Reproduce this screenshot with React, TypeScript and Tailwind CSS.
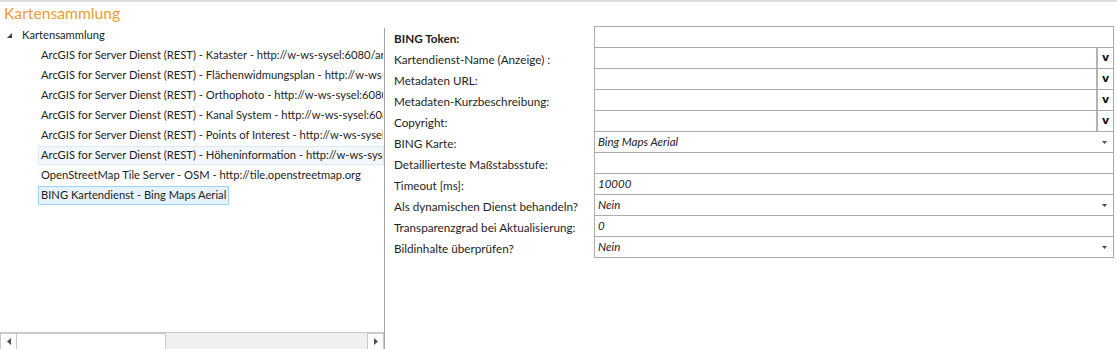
import React from "react";

const treeItems = [
  "ArcGIS for Server Dienst (REST) - Kataster - http://w-ws-sysel:6080/arcgis/rest/services/Kataster/MapServer",
  "ArcGIS for Server Dienst (REST) - Flächenwidmungsplan - http://w-ws-sysel:6080/arcgis/rest/services",
  "ArcGIS for Server Dienst (REST) - Orthophoto - http://w-ws-sysel:6080/arcgis/rest/services",
  "ArcGIS for Server Dienst (REST) - Kanal System - http://w-ws-sysel:6080/arcgis/rest/services",
  "ArcGIS for Server Dienst (REST) - Points of Interest - http://w-ws-sysel:6080/arcgis/rest/services",
  "ArcGIS for Server Dienst (REST) - Höheninformation - http://w-ws-sysel:6080/arcgis/rest/services",
  "OpenStreetMap Tile Server - OSM - http://tile.openstreetmap.org",
  "BING Kartendienst - Bing Maps Aerial",
];

type Field = {
  label: string;
  bold?: boolean;
  value?: string;
  kind: "text" | "more" | "select";
};

const fields: Field[] = [
  { label: "BING Token:", bold: true, kind: "text" },
  { label: "Kartendienst-Name (Anzeige) :", kind: "more" },
  { label: "Metadaten URL:", kind: "more" },
  { label: "Metadaten-Kurzbeschreibung:", kind: "more" },
  { label: "Copyright:", kind: "more" },
  { label: "BING Karte:", value: "Bing Maps Aerial", kind: "select" },
  { label: "Detaillierteste Maßstabsstufe:", kind: "text" },
  { label: "Timeout [ms]:", value: "10000", kind: "text" },
  { label: "Als dynamischen Dienst behandeln?", value: "Nein", kind: "select" },
  { label: "Transparenzgrad bei Aktualisierung:", value: "0", kind: "text" },
  { label: "Bildinhalte überprüfen?", value: "Nein", kind: "select" },
];

const DropArrow = () => (
  <svg width="5" height="3" viewBox="0 0 5 3" className="block">
    <polygon points="0,0 5,0 2.5,3" fill="#4a4a4a" />
  </svg>
);

const ScrollButton = ({ dir }: { dir: "left" | "right" }) => (
  <div className="w-[17px] h-[17px] border border-[#c8c8c8] bg-white flex items-center justify-center">
    <svg width="4" height="7" viewBox="0 0 4 7" className="block">
      {dir === "left" ? (
        <polygon points="4,0 4,7 0,3.5" fill="#505050" />
      ) : (
        <polygon points="0,0 0,7 4,3.5" fill="#505050" />
      )}
    </svg>
  </div>
);

export default function App() {
  return (
    <div
      className="w-[1117px] h-[349px] overflow-hidden bg-white border-t-2 border-[#dcdcdc] text-[#1e1e1e]"
      style={{ fontFamily: 'Lato, "Noto Sans", sans-serif' }}
    >
      {/* Header */}
      <div className="h-[23px] pl-[4px] text-[15.7px] leading-[22px] text-[#f29b32]">
        Kartensammlung
      </div>

      <div className="flex h-[324px]">
        {/* Tree */}
        <div className="w-[384px] flex flex-col">
          <div className="flex-1 overflow-hidden text-[11.2px]">
            <div className="h-[20px] flex items-center whitespace-nowrap">
              <div className="w-[22px] flex justify-end pr-[10px]">
                <svg width="5" height="5" viewBox="0 0 5 5" className="block">
                  <polygon points="5,0 5,5 0,5" fill="#3c3c3c" />
                </svg>
              </div>
              <span>Kartensammlung</span>
            </div>
            {treeItems.map((item, idx) => {
              const hover = idx === 5;
              const selected = idx === 7;
              return (
                <div key={idx} className="h-[20px] flex items-center pl-[38px]">
                  <div
                    className={
                      "h-[19px] flex items-center px-[2px] whitespace-nowrap overflow-hidden border " +
                      (selected
                        ? "border-[#9dd3f5] bg-[#e6f3fc]"
                        : hover
                        ? "border-[#dbeaf8] bg-[#f2f8fd] flex-1"
                        : "border-transparent flex-1")
                    }
                  >
                    {item}
                  </div>
                </div>
              );
            })}
          </div>

          {/* Horizontal scrollbar */}
          <div className="h-[17px] flex bg-[#f0f0f0] border-t border-[#c8c8c8]">
            <ScrollButton dir="left" />
            <div className="w-[150px] h-[17px] bg-white border border-[#c8c8c8] -ml-px" />
            <div className="flex-1" />
            <ScrollButton dir="right" />
          </div>
        </div>

        {/* Splitter */}
        <div className="w-px mt-[3px] bg-[#a3a3a3]" />

        {/* Properties */}
        <div className="flex-1 pt-[1px] pr-[3px] text-[11.7px]">
          {fields.map((f, idx) => (
            <div key={idx} className="flex h-[21px]">
              <div
                className={
                  "w-[209px] pl-[9px] pt-[4px] leading-[16px] whitespace-nowrap " +
                  (f.bold ? "font-bold" : "")
                }
              >
                {f.label}
              </div>
              <div
                className={
                  "flex-1 flex border-x border-t border-[#ababab] " +
                  (idx === fields.length - 1 ? "border-b h-[22px]" : "")
                }
              >
                <div className="flex-1 pl-[3px] pt-[1px] leading-[18px] italic text-[11.5px] text-[#222]">
                  {f.value}
                </div>
                {f.kind === "select" && (
                  <div className="w-[18px] flex items-center justify-center pt-[1px]">
                    <DropArrow />
                  </div>
                )}
                {f.kind === "more" && (
                  <div
                    className="w-[17px] border-l-2 border-[#b4b4b4] flex items-center justify-center text-[11px] font-bold text-[#111]"
                    style={{ fontFamily: '"DejaVu Sans", sans-serif' }}
                  >
                    v
                  </div>
                )}
              </div>
            </div>
          ))}
        </div>
      </div>
    </div>
  );
}
